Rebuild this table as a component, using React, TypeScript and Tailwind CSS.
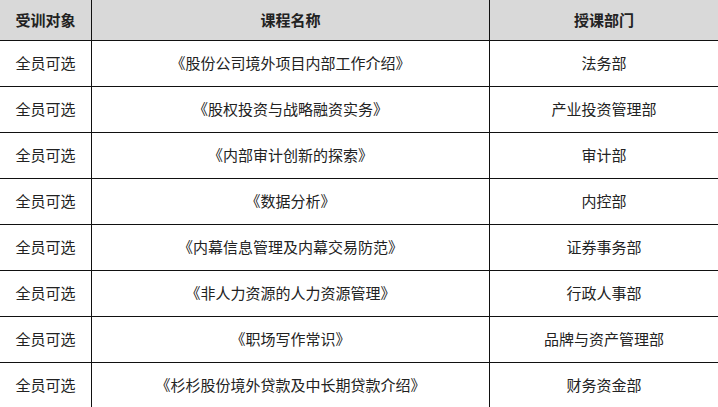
const ROWS: [string, string, string][] = [
  ["全员可选", "《股份公司境外项目内部工作介绍》", "法务部"],
  ["全员可选", "《股权投资与战略融资实务》", "产业投资管理部"],
  ["全员可选", "《内部审计创新的探索》", "审计部"],
  ["全员可选", "《数据分析》", "内控部"],
  ["全员可选", "《内幕信息管理及内幕交易防范》", "证券事务部"],
  ["全员可选", "《非人力资源的人力资源管理》", "行政人事部"],
  ["全员可选", "《职场写作常识》", "品牌与资产管理部"],
  ["全员可选", "《杉杉股份境外贷款及中长期贷款介绍》", "财务资金部"],
];

const font = { fontFamily: '"Noto Sans CJK SC", "Noto Sans", sans-serif' };

export default function App() {
  return (
    <div className="h-[407px] w-[718px] overflow-hidden bg-white text-[15px] text-[#222]" style={font}>
      <div className="grid h-[41px] grid-cols-[92px_398px_1fr] border-b border-[#111] bg-[#d9d9d9] font-bold">
        <div className="flex items-center justify-center border-r border-[#111]">受训对象</div>
        <div className="flex items-center justify-center border-r border-[#111]">课程名称</div>
        <div className="flex items-center justify-center">授课部门</div>
      </div>
      {ROWS.map((r, i) => (
        <div key={i} className="grid h-[46px] grid-cols-[92px_398px_1fr] border-b border-[#111]">
          <div className="flex items-center justify-center border-r border-[#111]">{r[0]}</div>
          <div className="flex items-center justify-center border-r border-[#111]">{r[1]}</div>
          <div className="flex items-center justify-center">{r[2]}</div>
        </div>
      ))}
    </div>
  );
}
